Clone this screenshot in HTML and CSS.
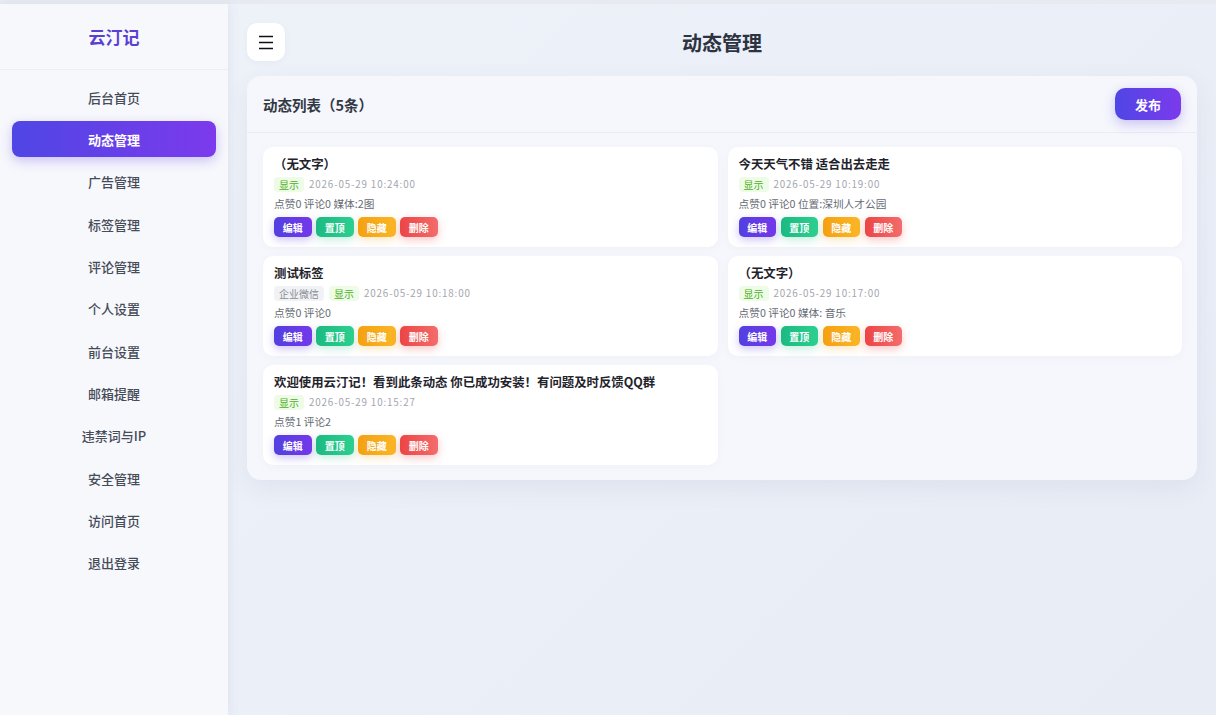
FILE: index.html
```html
<!DOCTYPE html>
<html lang="zh-CN">

<head>
    <meta charset="UTF-8">
    <meta name="viewport" content="width=device-width, initial-scale=1.0">
    <title>动态管理 - 云汀记</title>
    <link rel="stylesheet" href="styles.css">
</head>

<body>
    <div class="app">
        <!-- 侧边栏 -->
        <aside class="sidebar">
            <div class="logo">云汀记</div>
            <nav class="nav">
                <a class="nav-item">后台首页</a>
                <a class="nav-item active">动态管理</a>
                <a class="nav-item">广告管理</a>
                <a class="nav-item">标签管理</a>
                <a class="nav-item">评论管理</a>
                <a class="nav-item">个人设置</a>
                <a class="nav-item">前台设置</a>
                <a class="nav-item">邮箱提醒</a>
                <a class="nav-item">违禁词与IP</a>
                <a class="nav-item">安全管理</a>
                <a class="nav-item">访问首页</a>
                <a class="nav-item">退出登录</a>
            </nav>
        </aside>

        <main class="main">
            <div class="topbar">
                <button class="menu-btn">
                    <svg width="16" height="16" viewBox="0 0 16 16">
                        <path d="M1 2.5h14M1 8.5h14M1 14.5h14" stroke="#111" stroke-width="1.4" fill="none" />
                    </svg>
                </button>
                <h1 class="page-title">动态管理</h1>
                <div></div>
            </div>

            <section class="panel">
                <div class="panel-head">
                    <div class="panel-title">动态列表（5条）</div>
                    <button class="publish-btn">发布</button>
                </div>

                <div class="post-grid">
                    <div class="post">
                        <div class="post-title">（无文字）</div>
                        <div class="post-meta">
                            <span class="tag tag-show">显示</span>
                            <span class="date">2026-05-29 10:24:00</span>
                        </div>
                        <div class="post-stats">点赞0 评论0 媒体:2图</div>
                        <div class="post-actions">
                            <button class="btn btn-edit">编辑</button>
                            <button class="btn btn-top">置顶</button>
                            <button class="btn btn-hide">隐藏</button>
                            <button class="btn btn-del">删除</button>
                        </div>
                    </div>

                    <div class="post">
                        <div class="post-title">今天天气不错 适合出去走走</div>
                        <div class="post-meta">
                            <span class="tag tag-show">显示</span>
                            <span class="date">2026-05-29 10:19:00</span>
                        </div>
                        <div class="post-stats">点赞0 评论0 位置:深圳人才公园</div>
                        <div class="post-actions">
                            <button class="btn btn-edit">编辑</button>
                            <button class="btn btn-top">置顶</button>
                            <button class="btn btn-hide">隐藏</button>
                            <button class="btn btn-del">删除</button>
                        </div>
                    </div>

                    <div class="post">
                        <div class="post-title">测试标签</div>
                        <div class="post-meta">
                            <span class="tag tag-gray">企业微信</span>
                            <span class="tag tag-show">显示</span>
                            <span class="date">2026-05-29 10:18:00</span>
                        </div>
                        <div class="post-stats">点赞0 评论0</div>
                        <div class="post-actions">
                            <button class="btn btn-edit">编辑</button>
                            <button class="btn btn-top">置顶</button>
                            <button class="btn btn-hide">隐藏</button>
                            <button class="btn btn-del">删除</button>
                        </div>
                    </div>

                    <div class="post">
                        <div class="post-title">（无文字）</div>
                        <div class="post-meta">
                            <span class="tag tag-show">显示</span>
                            <span class="date">2026-05-29 10:17:00</span>
                        </div>
                        <div class="post-stats">点赞0 评论0 媒体: 音乐</div>
                        <div class="post-actions">
                            <button class="btn btn-edit">编辑</button>
                            <button class="btn btn-top">置顶</button>
                            <button class="btn btn-hide">隐藏</button>
                            <button class="btn btn-del">删除</button>
                        </div>
                    </div>

                    <div class="post">
                        <div class="post-title">欢迎使用云汀记！看到此条动态 你已成功安装！有问题及时反馈QQ群</div>
                        <div class="post-meta">
                            <span class="tag tag-show">显示</span>
                            <span class="date">2026-05-29 10:15:27</span>
                        </div>
                        <div class="post-stats">点赞1 评论2</div>
                        <div class="post-actions">
                            <button class="btn btn-edit">编辑</button>
                            <button class="btn btn-top">置顶</button>
                            <button class="btn btn-hide">隐藏</button>
                            <button class="btn btn-del">删除</button>
                        </div>
                    </div>
                </div>
            </section>
        </main>
    </div>
</body>

</html>
```

FILE: styles.css
```css
* {
    box-sizing: border-box;
}

body {
    margin: 0;
    padding-top: 4px;
    background-color: #e7eaf1;
    font-family: "Noto Sans CJK SC", "Noto Sans", sans-serif;
    color: #2b303b;
}

.app {
    display: flex;
    height: 711px;
    background: linear-gradient(135deg, #eef2f9 0%, #e8ecf5 100%);
}

/* 侧边栏 */
.sidebar {
    width: 228px;
    flex-shrink: 0;
    background-color: #f7f8fc;
    box-shadow: 2px 0 10px rgba(90, 100, 140, 0.08);
    position: relative;
    z-index: 1;
}

.logo {
    height: 66px;
    display: flex;
    justify-content: center;
    align-items: center;
    font-size: 17px;
    font-weight: 700;
    color: #5a3fd4;
    border-bottom: 1px solid #eceef4;
}

.nav {
    display: flex;
    flex-direction: column;
    gap: 6.35px;
    padding: 9px 12px 0 12px;
}

.nav-item {
    height: 36px;
    display: flex;
    justify-content: center;
    align-items: center;
    font-size: 13px;
    font-weight: 500;
    color: #464b58;
    border-radius: 8px;
    cursor: pointer;
}

.nav-item.active {
    color: #fff;
    font-weight: 700;
    background: linear-gradient(90deg, #4f46e5, #7c3aed);
    box-shadow: 0 4px 12px rgba(99, 70, 230, 0.3);
}

/* 主区域 */
.main {
    flex: 1;
    padding: 19px 19px 0 19px;
}

.topbar {
    display: grid;
    grid-template-columns: 38px 1fr 38px;
    align-items: center;
    height: 38px;
}

.menu-btn {
    width: 38px;
    height: 38px;
    border: none;
    border-radius: 10px;
    background-color: #fff;
    display: flex;
    justify-content: center;
    align-items: center;
    padding: 0;
    box-shadow: 0 2px 6px rgba(90, 100, 140, 0.05);
}

.page-title {
    margin: 0;
    text-align: center;
    font-size: 20px;
    font-weight: 700;
    color: #2d3340;
}

.panel {
    margin-top: 15px;
    background-color: #f5f7fc;
    border-radius: 14px;
    box-shadow: 0 8px 24px rgba(80, 90, 140, 0.08);
    padding-bottom: 15px;
}

.panel-head {
    height: 57px;
    display: flex;
    justify-content: space-between;
    align-items: center;
    padding: 0 16px;
    border-bottom: 1px solid #e9ecf3;
}

.panel-title {
    font-size: 14.5px;
    font-weight: 600;
    color: #333844;
}

.publish-btn {
    width: 66px;
    height: 32px;
    border: none;
    border-radius: 10px;
    color: #fff;
    font-family: inherit;
    font-size: 13px;
    font-weight: 700;
    background: linear-gradient(90deg, #4f46e5, #7c3aed);
    box-shadow: 0 4px 12px rgba(99, 70, 230, 0.3);
}

.post-grid {
    display: grid;
    grid-template-columns: 1fr 1fr;
    gap: 9px 10px;
    padding: 14px 15px 0 16px;
    align-items: start;
}

.post {
    background-color: #fff;
    border-radius: 10px;
    padding: 8px 11px 10px 11px;
    box-shadow: 0 2px 8px rgba(90, 100, 140, 0.04);
}

.post-title {
    font-size: 12.4px;
    font-weight: 600;
    line-height: 18px;
    color: #1f232b;
}

.post-meta {
    margin-top: 2px;
    display: flex;
    align-items: center;
    gap: 5px;
    height: 18px;
}

.tag {
    font-size: 10px;
    line-height: 15px;
    padding: 0 5px;
    border-radius: 4px;
}

.tag-show {
    color: #4caf1c;
    background-color: #eefbe6;
}

.tag-gray {
    color: #8a8d94;
    background-color: #f1f2f5;
}

.date {
    font-size: 9.8px;
    letter-spacing: 0.85px;
    color: #a3a6ad;
}

.post-stats {
    margin-top: 3px;
    font-size: 10.7px;
    line-height: 16px;
    color: #666a73;
}

.post-actions {
    margin-top: 5px;
    display: flex;
    gap: 4.5px;
}

.btn {
    width: 37.5px;
    height: 20px;
    border: none;
    border-radius: 5px;
    padding: 0;
    color: #fff;
    font-family: inherit;
    font-size: 10px;
    font-weight: 700;
}

.btn-edit {
    background: linear-gradient(90deg, #5240e0, #7438ea);
    box-shadow: 0 3px 8px rgba(90, 64, 224, 0.3);
}

.btn-top {
    background: linear-gradient(90deg, #1cba80, #2ccf92);
    box-shadow: 0 3px 8px rgba(30, 186, 128, 0.25);
}

.btn-hide {
    background: linear-gradient(90deg, #f4a111, #fab627);
    box-shadow: 0 3px 8px rgba(244, 161, 17, 0.25);
}

.btn-del {
    background: linear-gradient(90deg, #ec4545, #f36c6c);
    box-shadow: 0 3px 8px rgba(236, 69, 69, 0.3);
}
```
